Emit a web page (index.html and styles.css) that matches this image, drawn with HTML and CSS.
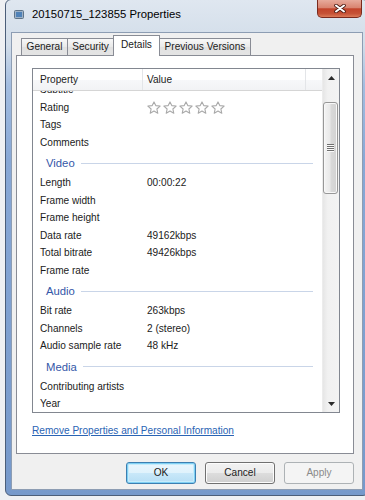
FILE: index.html
```html
<!DOCTYPE html>
<html>
<head>
<meta charset="utf-8">
<title>20150715_123855 Properties</title>
<link rel="stylesheet" href="styles.css">
</head>
<body>
<div class="window">
  <div class="titlebar">
    <svg class="ticon" width="10" height="9" viewBox="0 0 10 9">
      <rect x="0.5" y="0.5" width="9" height="8" rx="1" fill="#9fb3c8" stroke="#5f7488"/>
      <rect x="2" y="2" width="6" height="5" fill="#4f82b8"/>
    </svg>
    <span class="title">20150715_123855 Properties</span>
    <div class="close">
      <svg width="12" height="9" viewBox="0 0 12 9">
        <path d="M2 1.5 L10 7.5 M10 1.5 L2 7.5" stroke="#4a1a12" stroke-width="3.6" stroke-linecap="round"/>
        <path d="M2 1.5 L10 7.5 M10 1.5 L2 7.5" stroke="#ffffff" stroke-width="2" stroke-linecap="round"/>
      </svg>
    </div>
  </div>
  <div class="client">
    <div class="tabs">
      <div class="tab t-general">General</div>
      <div class="tab t-security">Security</div>
      <div class="tab t-details sel">Details</div>
      <div class="tab t-prev">Previous Versions</div>
    </div>
    <div class="panel">
      <div class="list">
        <div class="lmain">
          <div class="lhead">
            <div class="hc c1">Property</div>
            <div class="hc c2">Value</div>
            <div class="hc c3"></div>
          </div>
          <div class="lbody">
            <div class="row cut"><span class="p">Subtitle</span><span class="v"></span></div>
            <div class="row"><span class="p">Rating</span>
              <span class="v stars">
                <svg class="star" width="14" height="13" viewBox="0 0 13 12"><polygon points="6.5,0.8 8.15,4.23 12.2,4.65 9.16,7.37 10.03,11.35 6.5,9.3 2.97,11.35 3.84,7.37 0.8,4.65 4.85,4.23"/></svg>
                <svg class="star" width="14" height="13" viewBox="0 0 13 12"><polygon points="6.5,0.8 8.15,4.23 12.2,4.65 9.16,7.37 10.03,11.35 6.5,9.3 2.97,11.35 3.84,7.37 0.8,4.65 4.85,4.23"/></svg>
                <svg class="star" width="14" height="13" viewBox="0 0 13 12"><polygon points="6.5,0.8 8.15,4.23 12.2,4.65 9.16,7.37 10.03,11.35 6.5,9.3 2.97,11.35 3.84,7.37 0.8,4.65 4.85,4.23"/></svg>
                <svg class="star" width="14" height="13" viewBox="0 0 13 12"><polygon points="6.5,0.8 8.15,4.23 12.2,4.65 9.16,7.37 10.03,11.35 6.5,9.3 2.97,11.35 3.84,7.37 0.8,4.65 4.85,4.23"/></svg>
                <svg class="star" width="14" height="13" viewBox="0 0 13 12"><polygon points="6.5,0.8 8.15,4.23 12.2,4.65 9.16,7.37 10.03,11.35 6.5,9.3 2.97,11.35 3.84,7.37 0.8,4.65 4.85,4.23"/></svg>
              </span>
            </div>
            <div class="row"><span class="p">Tags</span><span class="v"></span></div>
            <div class="row"><span class="p">Comments</span><span class="v"></span></div>
            <div class="group"><span class="gt">Video</span><span class="gl"></span></div>
            <div class="row"><span class="p">Length</span><span class="v">00:00:22</span></div>
            <div class="row"><span class="p">Frame width</span><span class="v"></span></div>
            <div class="row"><span class="p">Frame height</span><span class="v"></span></div>
            <div class="row"><span class="p">Data rate</span><span class="v">49162kbps</span></div>
            <div class="row"><span class="p">Total bitrate</span><span class="v">49426kbps</span></div>
            <div class="row"><span class="p">Frame rate</span><span class="v"></span></div>
            <div class="group"><span class="gt">Audio</span><span class="gl"></span></div>
            <div class="row"><span class="p">Bit rate</span><span class="v">263kbps</span></div>
            <div class="row"><span class="p">Channels</span><span class="v">2 (stereo)</span></div>
            <div class="row"><span class="p">Audio sample rate</span><span class="v">48 kHz</span></div>
            <div class="group"><span class="gt">Media</span><span class="gl"></span></div>
            <div class="row"><span class="p">Contributing artists</span><span class="v"></span></div>
            <div class="row"><span class="p">Year</span><span class="v"></span></div>
          </div>
        </div>
        <div class="sbar">
          <div class="sarrow">
            <svg width="7" height="4" viewBox="0 0 7 4"><polygon points="0,4 7,4 3.5,0" fill="#2b2b2b"/></svg>
          </div>
          <div class="sgap"></div>
          <div class="thumb">
            <svg width="7" height="9" viewBox="0 0 7 9">
              <path d="M0 0.5 H7 M0 2.5 H7 M0 4.5 H7 M0 6.5 H7" stroke="#6f6f6f" stroke-width="1"/>
              <path d="M0 1.5 H7 M0 3.5 H7 M0 5.5 H7 M0 7.5 H7" stroke="#fafafa" stroke-width="1"/>
            </svg>
          </div>
          <div class="sfill"></div>
          <div class="sarrow">
            <svg width="7" height="4" viewBox="0 0 7 4"><polygon points="0,0 7,0 3.5,4" fill="#2b2b2b"/></svg>
          </div>
        </div>
      </div>
      <a class="link" href="#">Remove Properties and Personal Information</a>
    </div>
    <div class="buttons">
      <div class="btn default">OK</div>
      <div class="btn">Cancel</div>
      <div class="btn disabled">Apply</div>
    </div>
  </div>
</div>
</body>
</html>
```

FILE: styles.css
```css
* { box-sizing: border-box; }
html, body { margin: 0; padding: 0; }
body {
  width: 365px;
  height: 500px;
  overflow: hidden;
  background: #eef0f3;
  font-family: "Liberation Sans", Arial, sans-serif;
  font-size: 10.1px;
  color: #1b1b1b;
}
.window {
  margin: -1px 0 0 5px;
  width: 364px;
  height: 497px;
  border: 1px solid #4b5e79;
  border-radius: 6px;
  background: linear-gradient(to bottom, #dfe7f0 0px, #d2dde9 45px, #a3bde0 85px, #88a8d6 160px, #7699cb 100%);
  padding: 0 5px 5px 5px;
  display: flex;
  flex-direction: column;
}
.titlebar {
  height: 32px;
  flex: none;
  display: flex;
  align-items: flex-start;
}
.ticon { margin: 10px 0 0 3px; flex: none; }
.title {
  margin: 7px 0 0 8px;
  font-size: 11.3px;
  line-height: 14px;
  color: #000;
}
.close {
  margin-left: auto;
  margin-right: 1px;
  width: 45px;
  height: 18px;
  border: 1px solid #7a2a1e;
  border-top: none;
  border-radius: 0 0 5px 5px;
  background: linear-gradient(to bottom, #e7aa9b 0%, #d98470 45%, #c2432a 52%, #c65236 80%, #dc7a58 100%);
  display: flex;
  align-items: center;
  justify-content: center;
}
.client {
  height: 458px;
  flex: none;
  border: 1px solid #8d9db3;
  background: #f0f0f0;
  padding: 2px 8px 5px 4px;
  display: flex;
  flex-direction: column;
}
.tabs {
  height: 21px;
  flex: none;
  display: flex;
  align-items: flex-end;
  padding-left: 5px;
  margin-bottom: -1px;
  position: relative;
  z-index: 1;
}
.tab {
  height: 17px;
  margin-bottom: 1px;
  margin-right: -1px;
  border: 1px solid #898c95;
  border-bottom: none;
  background: linear-gradient(to bottom, #f8f8f8, #e9e9e9 50%, #e1e1e1 50%, #e4e4e4);
  text-align: center;
  line-height: 16px;
  color: #1b1b1b;
}
.t-general { width: 47px; }
.t-security { width: 47px; }
.t-details { width: 47px; }
.t-prev { width: 92px; }
.tab.sel {
  height: 21px;
  margin-bottom: 0;
  background: #ffffff;
  line-height: 14px;
  padding-top: 2px;
  position: relative;
  z-index: 2;
}
.panel {
  width: 338px;
  height: 399px;
  flex: none;
  border: 1px solid #898c95;
  background: #ffffff;
  padding: 12px 13px 0 15px;
}
.list {
  width: 308px;
  height: 345px;
  border: 1px solid #828790;
  display: flex;
}
.lmain {
  width: 289px;
  display: flex;
  flex-direction: column;
}
.lhead {
  height: 22px;
  flex: none;
  display: grid;
  grid-template-columns: 110px 163px 1fr;
  border-bottom: 1px solid #d5d5d5;
  background: linear-gradient(to bottom, #ffffff, #ffffff 50%, #f7f8fa 50%, #f2f3f5);
  line-height: 21px;
}
.hc { border-right: 1px solid #e3e5e8; color: #1b1b1b; }
.c1 { padding-left: 7px; }
.c2 { padding-left: 4px; }
.c3 { border-right: none; }
.lbody {
  height: 321px;
  overflow: hidden;
}
.row {
  height: 17.5px;
  display: grid;
  grid-template-columns: 110px 1fr;
  line-height: 17.5px;
  white-space: nowrap;
}
.row.cut { margin-top: -10px; }
.p { padding-left: 7px; }
.v { padding-left: 4px; }
.stars { display: flex; align-items: center; gap: 2px; padding-top: 0; }
.star polygon {
  fill: #ffffff;
  stroke: #a9a9a9;
  stroke-width: 1;
  stroke-linejoin: round;
}
.group {
  height: 23px;
  display: flex;
  align-items: center;
  padding: 1px 9px 0 13px;
}
.gt {
  font-size: 11.3px;
  color: #3457a8;
  line-height: 14px;
}
.gl {
  flex: 1;
  height: 1px;
  margin-left: 6px;
  background: #c9d5e8;
}
.sbar {
  width: 17px;
  display: flex;
  flex-direction: column;
  background: linear-gradient(to right, #e6e6e6, #f1f1f1 30%, #f3f3f3);
  border-left: 1px solid #ececec;
}
.sarrow {
  height: 17px;
  flex: none;
  display: flex;
  align-items: center;
  justify-content: center;
}
.sgap { height: 16px; flex: none; }
.thumb {
  height: 92px;
  flex: none;
  margin: 0 1px 0 0;
  border: 1px solid #979797;
  border-radius: 3px;
  background: linear-gradient(to right, #f4f4f4, #e9e9e9 45%, #d9d9d9 55%, #d2d2d2);
  box-shadow: inset 0 0 0 1px #f8f8f8;
  display: flex;
  align-items: center;
  justify-content: center;
}
.sfill { flex: 1; }
.link {
  display: block;
  margin-top: 11px;
  line-height: 14px;
  color: #2a64b4;
  text-decoration: underline;
  white-space: nowrap;
}
.buttons {
  margin-top: 8px;
  height: 22px;
  flex: none;
  display: flex;
  justify-content: flex-end;
  gap: 9px;
}
.btn {
  width: 70px;
  height: 22px;
  border: 1px solid #707070;
  border-radius: 3px;
  background: linear-gradient(to bottom, #f2f2f2, #ebebeb 50%, #dddddd 50%, #cfcfcf);
  box-shadow: inset 0 0 0 1px #fcfcfc;
  text-align: center;
  line-height: 20px;
  color: #1b1b1b;
}
.btn.default {
  border-color: #3c7fb1;
  background: linear-gradient(to bottom, #eaf6fd, #dff2fc 50%, #c9e8f9 50%, #b6def5);
  box-shadow: inset 0 0 0 1px #7fd0f4, inset 0 0 0 2px #c6ecfb;
}
.btn.disabled {
  border-color: #adb2b5;
  background: #f4f4f4;
  box-shadow: none;
  color: #8a8a8a;
}
```
